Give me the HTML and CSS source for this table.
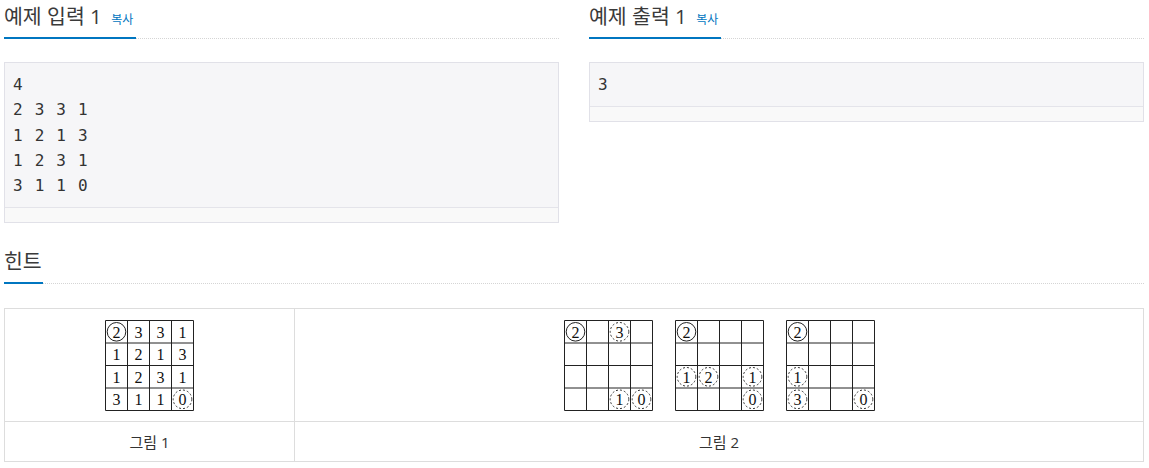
FILE: index.html
```html
<!DOCTYPE html>
<html lang="ko">
<head>
    <meta charset="UTF-8">
    <meta name="viewport" content="width=device-width, initial-scale=1.0">
    <title>예제</title>
    <link rel="stylesheet" href="styles.css">
</head>
<body>
    <svg class="defs" width="0" height="0">
        <symbol id="grid" viewBox="0 0 89 91">
            <path d="M0.5 0.5H88.5V90.5H0.5Z M22.5 0.5V90.5 M44.5 0.5V90.5 M66.5 0.5V90.5 M0.5 23H88.5 M0.5 45.5H88.5 M0.5 68H88.5" fill="none" stroke="#222" stroke-width="1"/>
        </symbol>
    </svg>

    <div class="page">
        <div class="row">
            <section class="col">
                <div class="headline">
                    <h2>예제 입력 1 <a class="copy">복사</a></h2>
                </div>
                <div class="sample">
                    <pre>4
2 3 3 1
1 2 1 3
1 2 3 1
3 1 1 0</pre>
                    <div class="scroll"></div>
                </div>
            </section>
            <section class="col">
                <div class="headline">
                    <h2>예제 출력 1 <a class="copy">복사</a></h2>
                </div>
                <div class="sample">
                    <pre>3</pre>
                    <div class="scroll"></div>
                </div>
            </section>
        </div>

        <section class="hint">
            <div class="headline">
                <h2>힌트</h2>
            </div>
            <table>
                <tr>
                    <td class="pic first">
                        <svg class="board" width="89" height="91" viewBox="0 0 89 91">
                            <use href="#grid"/>
                            <circle class="solid" cx="11.5" cy="11.8" r="9.3"/>
                            <g class="num">
                                <text x="11.5" y="12">2</text><text x="33.5" y="12">3</text><text x="55.5" y="12">3</text><text x="77.5" y="12">1</text>
                                <text x="11.5" y="34.5">1</text><text x="33.5" y="34.5">2</text><text x="55.5" y="34.5">1</text><text x="77.5" y="34.5">3</text>
                                <text x="11.5" y="57">1</text><text x="33.5" y="57">2</text><text x="55.5" y="57">3</text><text x="77.5" y="57">1</text>
                                <text x="11.5" y="79.5">3</text><text x="33.5" y="79.5">1</text><text x="55.5" y="79.5">1</text><text x="77.5" y="79.5">0</text>
                            </g>
                            <circle class="dash" cx="77.5" cy="79.3" r="9.3"/>
                        </svg>
                    </td>
                    <td class="pic">
                        <div class="boards">
                            <svg class="board" width="89" height="91" viewBox="0 0 89 91">
                                <use href="#grid"/>
                                <circle class="solid" cx="11.5" cy="11.8" r="9.3"/>
                                <circle class="dash" cx="55.5" cy="11.8" r="9.3"/>
                                <circle class="dash" cx="55.5" cy="79.3" r="9.3"/>
                                <circle class="dash" cx="77.5" cy="79.3" r="9.3"/>
                                <g class="num">
                                    <text x="11.5" y="12">2</text><text x="55.5" y="12">3</text>
                                    <text x="55.5" y="79.5">1</text><text x="77.5" y="79.5">0</text>
                                </g>
                            </svg>
                            <svg class="board" width="89" height="91" viewBox="0 0 89 91">
                                <use href="#grid"/>
                                <circle class="solid" cx="11.5" cy="11.8" r="9.3"/>
                                <circle class="dash" cx="11.5" cy="56.8" r="9.3"/>
                                <circle class="dash" cx="33.5" cy="56.8" r="9.3"/>
                                <circle class="dash" cx="77.5" cy="56.8" r="9.3"/>
                                <circle class="dash" cx="77.5" cy="79.3" r="9.3"/>
                                <g class="num">
                                    <text x="11.5" y="12">2</text>
                                    <text x="11.5" y="57">1</text><text x="33.5" y="57">2</text><text x="77.5" y="57">1</text>
                                    <text x="77.5" y="79.5">0</text>
                                </g>
                            </svg>
                            <svg class="board" width="89" height="91" viewBox="0 0 89 91">
                                <use href="#grid"/>
                                <circle class="solid" cx="11.5" cy="11.8" r="9.3"/>
                                <circle class="dash" cx="11.5" cy="56.8" r="9.3"/>
                                <circle class="dash" cx="11.5" cy="79.3" r="9.3"/>
                                <circle class="dash" cx="77.5" cy="79.3" r="9.3"/>
                                <g class="num">
                                    <text x="11.5" y="12">2</text>
                                    <text x="11.5" y="57">1</text>
                                    <text x="11.5" y="79.5">3</text><text x="77.5" y="79.5">0</text>
                                </g>
                            </svg>
                        </div>
                    </td>
                </tr>
                <tr>
                    <td class="caption first">그림 1</td>
                    <td class="caption">그림 2</td>
                </tr>
            </table>
        </section>
    </div>
</body>
</html>
```

FILE: styles.css
```css
html {
    box-sizing: border-box;
}

body {
    margin: 0;
    background: white;
    color: #333;
    font-family: "Open Sans", "Noto Sans CJK KR", sans-serif;
}

.defs {
    position: absolute;
    width: 0;
    height: 0;
}

.page {
    padding: 0 5px 0 4px;
}

.row {
    display: grid;
    grid-template-columns: 1fr 1fr;
    column-gap: 30px;
}

.headline {
    display: flex;
    border-bottom: 1px dotted #d5d5d5;
}

.headline h2 {
    margin: 0 0 -1px 0;
    padding: 0 3px 5px 0;
    height: 32px;
    font-size: 20.5px;
    font-weight: 400;
    line-height: 32px;
    color: #3a3a3a;
    border-bottom: 2px solid #0076c0;
    white-space: nowrap;
}

.copy {
    margin-left: 4px;
    font-size: 12px;
    line-height: 1;
    color: #0076c0;
    cursor: pointer;
}

.sample {
    margin-top: 23px;
    background: #f6f6f8;
    border: 1px solid #e1e1e8;
}

.sample pre {
    margin: 0;
    padding: 9px 8px;
    font-family: "DejaVu Sans Mono", monospace;
    font-size: 16px;
    line-height: 25.3px;
    letter-spacing: 1.2px;
    color: #333;
}

.scroll {
    height: 14px;
    border-top: 1px solid #e4e4ea;
    background: #f9f9f9;
}

.hint {
    margin-top: 22px;
}

.hint h2 {
    padding-right: 1px;
}

.hint table {
    margin-top: 24px;
    width: 100%;
    border-collapse: collapse;
}

.hint td {
    border: 1px solid #ddd;
    text-align: center;
    padding: 0;
}

.hint td.first {
    width: 289px;
}

.pic {
    height: 112px;
}

.board {
    display: block;
}

.first .board {
    margin: 0 auto;
}

.boards {
    display: flex;
    justify-content: center;
    gap: 22px;
}

.board .num text {
    font-family: "Liberation Serif", serif;
    font-size: 16px;
    fill: #111;
    text-anchor: middle;
    dominant-baseline: central;
}

.board .solid {
    fill: none;
    stroke: #222;
    stroke-width: 1;
}

.board .dash {
    fill: none;
    stroke: #333;
    stroke-width: 1;
    stroke-dasharray: 2 2;
}

.caption {
    height: 39px;
    font-size: 15px;
    color: #333;
}
```
